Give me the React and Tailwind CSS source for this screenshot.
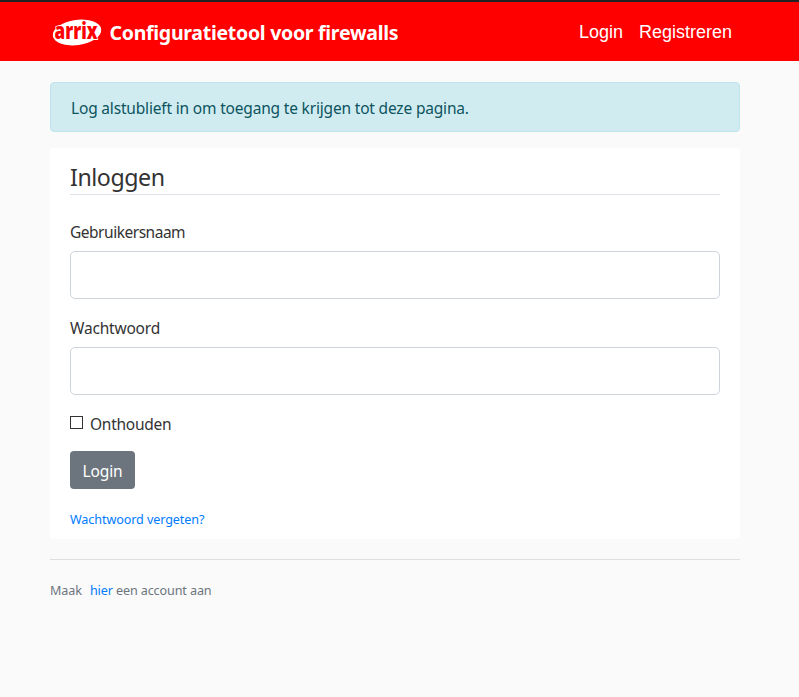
function Logo() {
  return (
    <svg className="-my-2 ml-0.5 h-12 w-[54px] shrink-0 overflow-visible" viewBox="0 -8 54 48" role="img" aria-label="arrix">
      <ellipse cx="26" cy="16.5" rx="24.4" ry="12.6" fill="#fff" transform="rotate(-8 26 16.5)" />
      <text
        x="3.5"
        y="23"
        textLength="43"
        lengthAdjust="spacingAndGlyphs"
        fontFamily="'Open Sans', sans-serif"
        fontWeight="800"
        fontSize="23"
        fill="#f00"
        stroke="#fff"
        strokeWidth="1.8"
        strokeLinejoin="round"
        paintOrder="stroke"
      >
        arrix
      </text>
    </svg>
  );
}

function Field({ label, type, tracking }) {
  return (
    <label className="mb-4 block">
      <span className={`mb-2 block h-6 pt-px leading-6 ${tracking}`}>{label}</span>
      <input type={type} className="block h-12 w-full rounded-[5px] border border-[#ced4da] bg-white px-4" />
    </label>
  );
}

export default function App() {
  return (
    <div className="min-h-screen bg-[#fafafa] font-['Noto_Sans',sans-serif] text-[15.5px] text-[#333]">
      <header className="flex h-[61px] items-center border-t-2 border-[#222] bg-[#f00] pr-[67px] pl-[49px] text-white">
        <Logo />
        <span className="ml-[4.5px] pt-[3px] text-[19.5px] font-bold tracking-[-0.28px] whitespace-nowrap">
          Configuratietool voor firewalls
        </span>
        <nav className="ml-auto flex gap-4 pt-px font-['Liberation_Sans',sans-serif] text-[18px]">
          <a href="#login">Login</a>
          <a href="#registreren">Registreren</a>
        </nav>
      </header>
      <main className="ml-[50px] w-[690px] pt-[21px]">
        <div className="mb-4 flex h-[50px] items-center rounded border border-[#bee5eb] bg-[#d1ecf1] px-5 pt-1 text-[#0c5460]">
          <span className="tracking-[-0.18px] whitespace-nowrap">Log alstublieft in om toegang te krijgen tot deze pagina.</span>
        </div>
        <section className="h-[391px] rounded bg-white px-5 pt-[11px]">
          <h1 className="mb-6 h-9 border-b border-[#dee2e6] text-[23.2px] leading-[37px] tracking-[-0.45px]">Inloggen</h1>
          <form>
            <Field label="Gebruikersnaam" type="text" tracking="tracking-[-0.48px]" />
            <Field label="Wachtwoord" type="password" tracking="tracking-[-0.2px]" />
            <label className="flex h-6 items-center pt-[2px]">
              <input type="checkbox" className="mb-[3px] h-[13px] w-[13px] appearance-none border border-[#333] bg-white" />
              <span className="ml-[7px] pt-px tracking-[-0.25px]">Onthouden</span>
            </label>
            <button type="button" className="mt-4 flex h-[38px] w-[65px] items-center justify-center rounded bg-[#6c757d] pt-[3px] tracking-[-0.15px] text-white">
              Login
            </button>
            <a href="#vergeten" className="mt-[21px] block text-[12.6px] leading-5 tracking-[-0.1px] text-[#007bff]">
              Wachtwoord vergeten?
            </a>
          </form>
        </section>
        <footer className="mt-5 border-t border-[#dfdfdf] pt-5 text-[12.6px] leading-[22px] tracking-[-0.12px] text-[#6c757d]">
          Maak <a href="#account" className="ml-[5px] text-[#007bff]">hier</a> een account aan
        </footer>
      </main>
    </div>
  );
}
